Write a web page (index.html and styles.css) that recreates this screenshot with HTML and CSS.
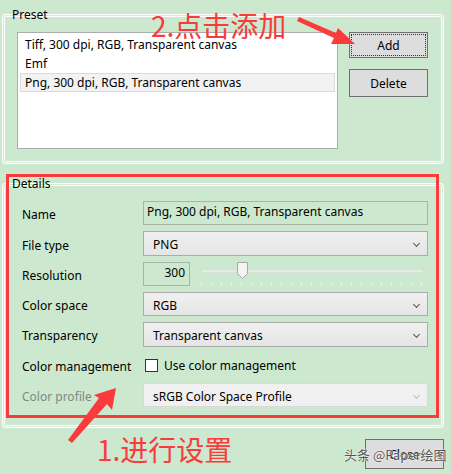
FILE: index.html
```html
<!DOCTYPE html>
<html lang="en">

<head>
    <meta charset="UTF-8">
    <meta name="viewport" content="width=device-width, initial-scale=1.0">
    <title>Export Preset</title>
    <link rel="stylesheet" href="styles.css">
</head>

<body>
    <div class="window">
        <!-- Preset list -->
        <fieldset class="group preset">
            <legend>Preset</legend>
            <div class="preset-body">
                <ul class="list">
                    <li>Tiff, 300 dpi, RGB, Transparent canvas</li>
                    <li>Emf</li>
                    <li class="selected">Png, 300 dpi, RGB, Transparent canvas</li>
                </ul>
                <div class="side-buttons">
                    <button class="btn focused">Add</button>
                    <button class="btn delete">Delete</button>
                </div>
            </div>
        </fieldset>

        <!-- Details -->
        <fieldset class="group details">
            <legend>Details</legend>
            <div class="form">
                <label>Name</label>
                <div class="textbox">Png, 300 dpi, RGB, Transparent canvas</div>

                <label>File type</label>
                <div class="combo">PNG<span class="chev"></span></div>

                <label>Resolution</label>
                <div class="res-row">
                    <div class="textbox num">300</div>
                    <div class="slider">
                        <div class="track"></div>
                        <div class="thumb">
                            <svg width="11" height="17" viewBox="0 0 11 17"><path d="M0.5 0.5 H10.5 V11.5 L5.5 16.5 L0.5 11.5 Z" fill="#f4f4f4" stroke="#a8a8a8"/></svg>
                        </div>
                        <div class="ticks"></div>
                    </div>
                </div>

                <label>Color space</label>
                <div class="combo">RGB<span class="chev"></span></div>

                <label>Transparency</label>
                <div class="combo">Transparent canvas<span class="chev"></span></div>

                <label>Color management</label>
                <div class="check"><span class="box"></span>Use color management</div>

                <label class="disabled">Color profile</label>
                <div class="combo off">sRGB Color Space Profile<span class="chev"></span></div>
            </div>
        </fieldset>

        <div class="footer">
            <button class="btn close">Close</button>
        </div>

        <!-- Annotations drawn over the dialog -->
        <div class="mark-box"></div>
        <svg class="arrows" width="451" height="474" viewBox="0 0 451 474">
            <path d="M299 17 L336 33 L338 28 L355 44 L331 44 L334 38 L297 21 Z" fill="#f93b3b"/>
            <path d="M68 440 L99 398 L94 395 L116 388 L112 410 L107 404 L72 443 Z" fill="#f93b3b"/>
        </svg>
        <div class="note note-add">2.点击添加</div>
        <div class="note note-set">1.进行设置</div>
        <div class="watermark">头条 @Paper绘图</div>
    </div>
</body>

</html>
```

FILE: styles.css
```css
* {
    margin: 0;
    padding: 0;
    box-sizing: border-box;
}

body {
    font-family: 'Noto Sans', 'Open Sans', sans-serif;
    font-size: 12px;
    color: #000;
    background-color: #cce8cf;
}

.window {
    position: relative;
    width: 451px;
    height: 474px;
    overflow: hidden;
    background-color: #cce8cf;
    padding: 7px 8px 0 3px;
}

.group {
    border: 1px solid #dfe6df;
    border-radius: 3px;
    box-shadow: 0 0 0 1px #ffffff, inset 0 0 0 1px #ffffff;
    width: 440px;
}

.group legend {
    padding: 0 2px;
    line-height: 16px;
    height: 16px;
}

.preset {
    padding: 9px 13px 13px 13px;
}

.preset legend {
    margin-left: -7px;
}

.preset-body {
    display: flex;
    gap: 11px;
}

.list {
    list-style: none;
    width: 321px;
    height: 117px;
    background-color: #ffffff;
    border: 1px solid #acacac;
    padding: 2px 2px 0 2px;
}

.list li {
    height: 19px;
    line-height: 17px;
    padding-left: 4px;
    border: 1px solid transparent;
}

.list li.selected {
    background-color: #f2f2f2;
    border-color: #dadada;
}

.side-buttons {
    display: flex;
    flex-direction: column;
    gap: 11px;
}

.btn {
    font-family: inherit;
    font-size: 12px;
    width: 79px;
    height: 27px;
    background-color: #dddddd;
    border: 1px solid #707070;
    color: #000;
}

.btn.focused {
    height: 26px;
    outline: 1px dotted #333;
    outline-offset: -3px;
}

.btn.delete {
    height: 28px;
}

.details {
    margin-top: 13px;
    padding: 9px 14px 19px 18px;
}

.details legend {
    margin-left: -12px;
}

.form {
    display: grid;
    grid-template-columns: 121px 285px;
    grid-auto-rows: 24.5px;
    row-gap: 5.8px;
    align-items: center;
}

.form label {
    line-height: 16px;
    padding-top: 4px;
}

.form label.disabled {
    color: #7f8a7f;
}

.textbox {
    height: 24px;
    border: 1px solid #a7b2a8;
    padding: 2px 3px;
    line-height: 16px;
    background-color: #cce8cf;
}

.textbox.num {
    width: 47px;
    text-align: right;
    padding-right: 4px;
}

.res-row {
    display: flex;
    align-items: flex-start;
    gap: 10px;
    height: 24px;
}

.slider {
    position: relative;
    flex: 1;
    height: 24px;
    margin-right: 4px;
}

.track {
    position: absolute;
    left: 1px;
    right: 0;
    top: 7px;
    height: 4px;
    background-color: #e7eae7;
    border: 1px solid #d6dcd6;
}

.thumb {
    position: absolute;
    left: 37px;
    top: 0;
    line-height: 0;
}

.ticks {
    position: absolute;
    left: 1px;
    right: 0;
    top: 20px;
    height: 4px;
    background-image: repeating-linear-gradient(to right, #e8efe8 0, #e8efe8 1px, transparent 1px, transparent 10px);
}

.combo {
    position: relative;
    height: 24.5px;
    line-height: 26px;
    padding-left: 9px;
    border: 1px solid #acacac;
    background: linear-gradient(#f0f0f0, #e5e5e5);
}

.combo.off {
    background: #f0f0f0;
    border-color: #d9d9d9;
}

.chev {
    position: absolute;
    right: 8px;
    top: 9px;
    width: 5px;
    height: 5px;
    border-right: 1px solid #555;
    border-bottom: 1px solid #555;
    transform: rotate(45deg);
}

.combo.off .chev {
    border-color: #c0c0c0;
}

.check {
    display: flex;
    align-items: center;
    gap: 6px;
    padding-left: 2px;
    padding-top: 2px;
}

.box {
    width: 13px;
    height: 13px;
    background-color: #ffffff;
    border: 1px solid #333;
}

.footer {
    display: flex;
    justify-content: flex-end;
    margin-top: 12px;
    margin-right: -1px;
}

.btn.close {
    height: 30px;
}

/* annotations */
.mark-box {
    position: absolute;
    left: 6px;
    top: 174px;
    width: 433px;
    height: 244px;
    border: 3px solid #f93b3b;
}

.arrows {
    position: absolute;
    left: 0;
    top: 0;
}

.note {
    position: absolute;
    font-family: 'Noto Sans CJK SC', sans-serif;
    font-size: 28px;
    line-height: 30px;
    color: #f93b3b;
    white-space: nowrap;
}

.note-add {
    left: 151px;
    top: 10px;
}

.note-set {
    left: 97px;
    top: 434px;
}

.watermark {
    position: absolute;
    left: 344px;
    top: 446px;
    font-family: 'Noto Sans CJK SC', sans-serif;
    font-size: 13px;
    line-height: 18px;
    color: #555;
    white-space: nowrap;
    text-shadow: 0 0 2px #fff, 0 0 1px #fff;
}
```
